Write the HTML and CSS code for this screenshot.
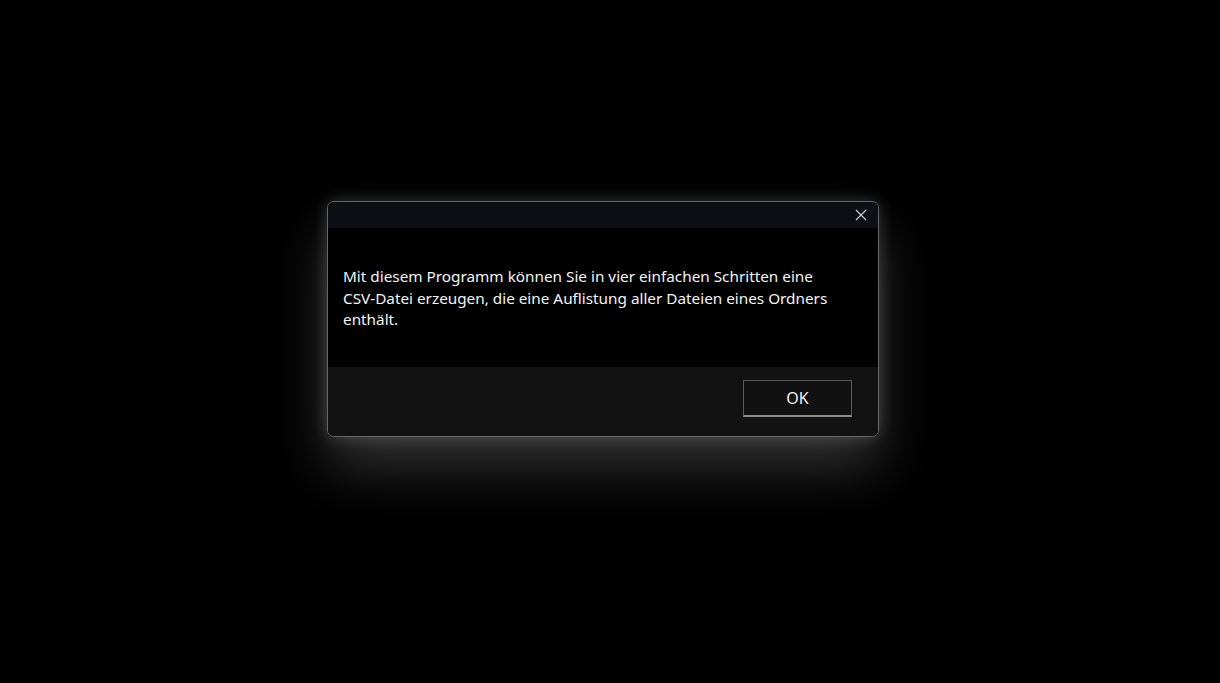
FILE: index.html
```html
<!DOCTYPE html>
<html lang="de">
<head>
<meta charset="utf-8">
<title>Hinweis</title>
<link rel="stylesheet" href="styles.css">
</head>
<body>
<div class="stage">
  <div class="dialog">
    <div class="titlebar">
      <button class="close" aria-label="Schließen">
        <svg width="12" height="12" viewBox="0 0 12 12"><path d="M1 1 L11 11 M11 1 L1 11" stroke="#d0d0d0" stroke-width="1.1" fill="none"/></svg>
      </button>
    </div>
    <div class="content">
      <p class="message">Mit diesem Programm können Sie in vier einfachen Schritten eine CSV-Datei erzeugen, die eine Auflistung aller Dateien eines Ordners enthält.</p>
    </div>
    <div class="footer">
      <button class="ok">OK</button>
    </div>
  </div>
</div>
</body>
</html>
```

FILE: styles.css
```css
html, body {
  margin: 0;
  padding: 0;
  background: #000;
  height: 100%;
}
.stage {
  padding: 201px 0 0 327px;
}
.dialog {
  width: 550px;
  border: 1px solid #666;
  border-radius: 7px;
  overflow: hidden;
  background: #000;
  box-shadow: 0 0 16px rgba(255,255,255,0.2), 0 30px 55px rgba(255,255,255,0.2);
  font-family: "Noto Sans", "Open Sans", sans-serif;
}
.titlebar {
  height: 26px;
  background: #0d0f15;
  display: flex;
  justify-content: flex-end;
  align-items: center;
}
.close {
  width: 32px;
  height: 26px;
  margin-right: 1px;
  padding: 0;
  border: 0;
  background: transparent;
  display: flex;
  align-items: center;
  justify-content: center;
}
.content {
  height: 139px;
  box-sizing: border-box;
  padding: 38px 15px 0 15px;
}
.message {
  margin: 0;
  color: #f4f4f4;
  font-size: 15.3px;
  line-height: 21.5px;
  max-width: 500px;
}
.footer {
  height: 69px;
  background: #121212;
  box-sizing: border-box;
  padding: 13px 26px 0 0;
  display: flex;
  justify-content: flex-end;
  align-items: flex-start;
}
.ok {
  width: 109px;
  height: 37px;
  box-sizing: border-box;
  background: #111;
  border: 1px solid #5a5a5a;
  border-bottom: 2px solid #8c8c8c;
  color: #f0f0f0;
  font-family: "Noto Sans", "Open Sans", sans-serif;
  font-size: 16px;
  padding: 0;
}
```
